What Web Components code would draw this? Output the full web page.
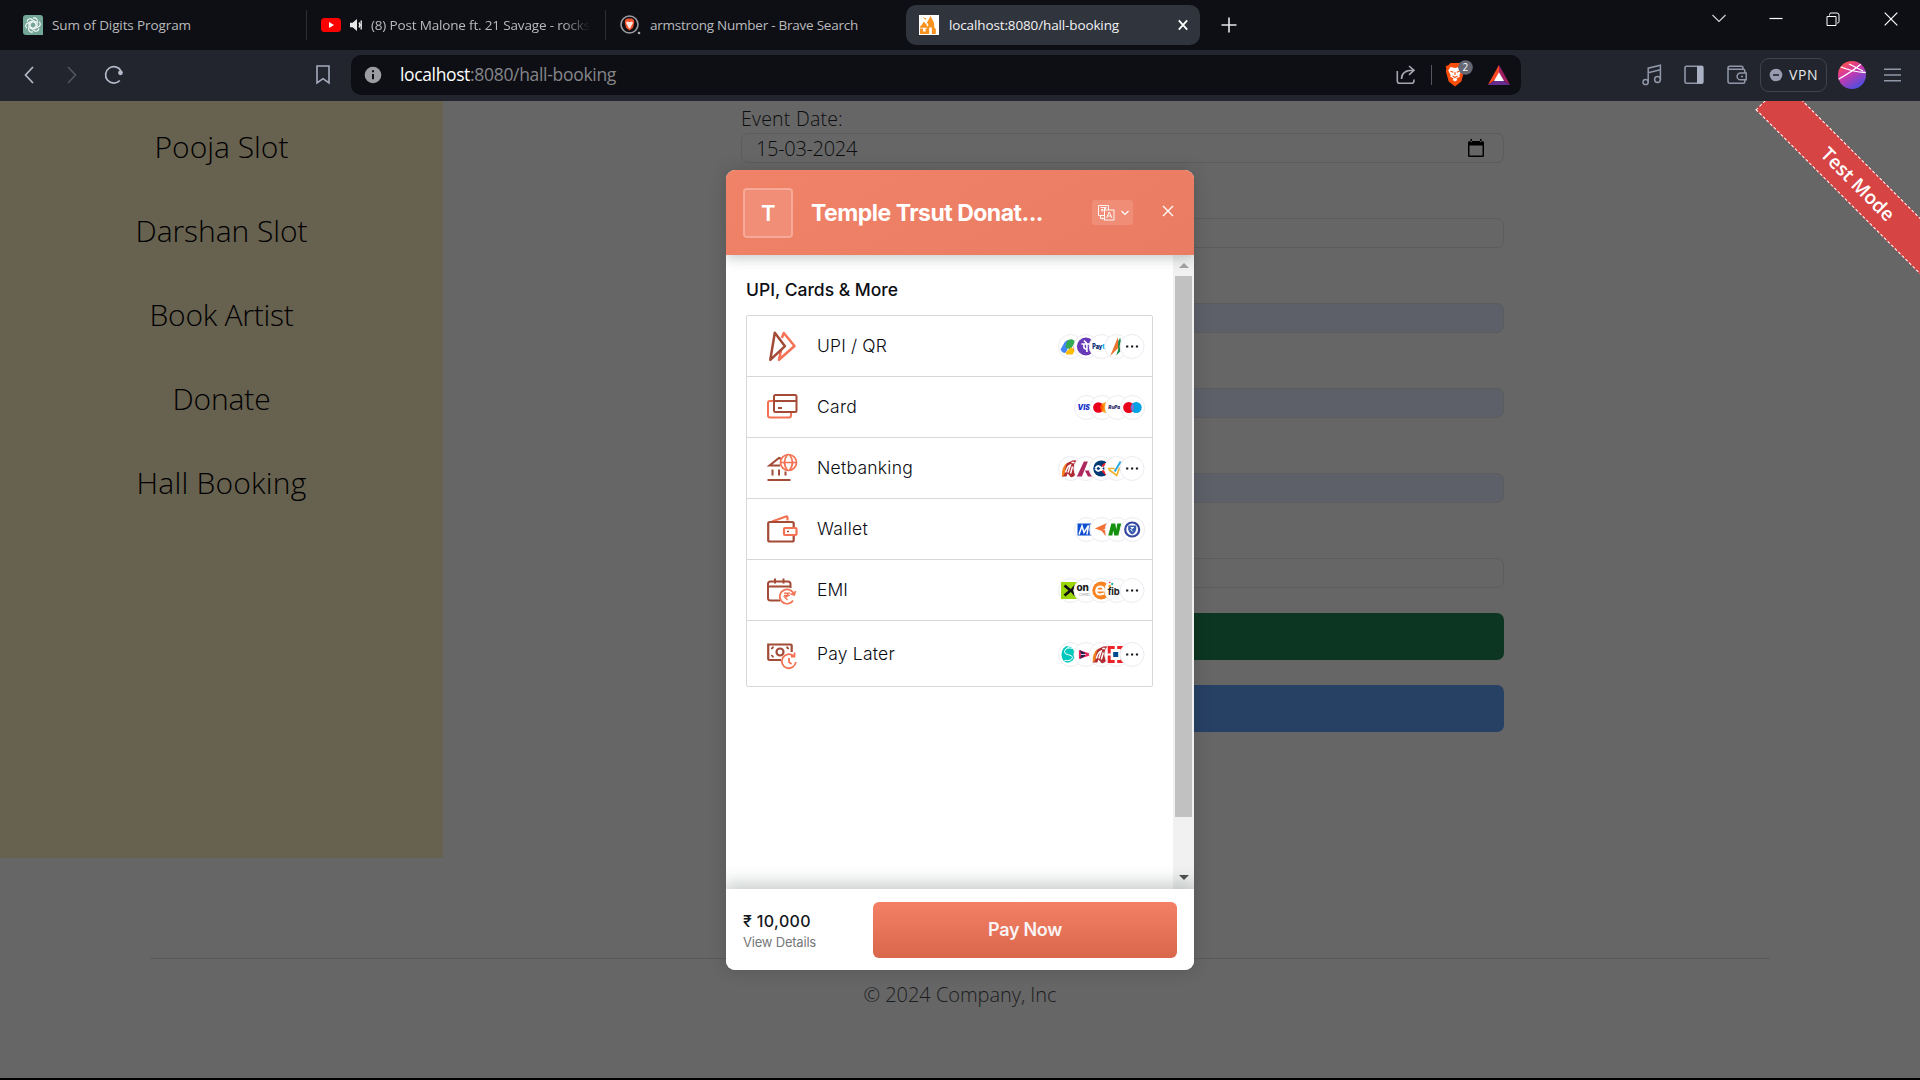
<!DOCTYPE html>
<html lang="en">
<head>
<meta charset="utf-8">
<title>Hall Booking</title>
<style>
html,body{margin:0;padding:0;background:#000;overflow:hidden}
</style>
</head>
<body>
<app-window></app-window>
<script>
const define = (name, html, setup) => {
  const t = document.createElement('template');
  t.innerHTML = html;
  customElements.define(name, class extends HTMLElement {
    constructor() { super(); this.attachShadow({mode: 'open'}).append(t.content.cloneNode(true)); }
    connectedCallback() { if (setup) setup(this, this.shadowRoot); }
  });
};

/* text run whose tracking is adjusted to fill the width given in "w" */
define('fit-text', `<style>:host{display:block;white-space:pre;flex:none}span{display:inline-block}</style><span></span>`, (el, root) => {
  const s = root.querySelector('span');
  s.textContent = el.getAttribute('text');
  const w = +el.getAttribute('w');
  s.style.letterSpacing = '0px';
  const n = parseFloat(getComputedStyle(s).width);
  s.style.letterSpacing = ((w - n) / s.textContent.length) + 'px';
  el.style.width = w + 'px';
});

const PETAL = 'd="M10 3.200c2.400-1.200 5 1 4.200 3.400L14 11l-4 2.400"';
const ICONS = {
  gpt: [20,20,`<path d="M3 0h14q3 0 3 3v17H3q-3 0-3-3V3q0-3 3-3z" fill="#74a698"/><g fill="none" stroke="#fff" stroke-width="1.100">${[0,60,120,180,240,300].map(a => `<path transform="rotate(${a} 10 10)" ${PETAL}/>`).join('')}</g>`],
  yt: [20,20,`<rect y="3" width="20" height="14" rx="3.500" fill="#f00"/><path d="M8 7l5 3-5 3z" fill="#fff"/>`],
  sound: [14,14,`<path d="M1 4.700h2.600L8 1v12L3.600 9.300H1z" fill="#e8e8ea"/><path d="M10 4.500q1.600 2.500 0 5M12.200 2.600v8.800" fill="none" stroke="#e8e8ea" stroke-width="1.400"/>`],
  bsearch: [22,20,`<circle cx="9.500" cy="9.500" r="8.500" fill="#0e0f14" stroke="#9b9da2" stroke-width="1.600"/><path d="M5.500 4.500l1.700-1h4.600l1.700 1 .8 2.500-1.300 5.800-3.500 2.700L6 12.800 4.700 7z" fill="#f4502a"/><path d="M6.500 6.500l3 .6 3-.6.3 2-1.500 2.500-1 2.200h-1.600l-1-2.200-1.500-2.500z" fill="#ffe4de"/><circle cx="19" cy="18" r="1.300" fill="#aaa"/>`],
  temple: [20,20,`<path fill="#fff" d="M0 0h20v20H0z"/><path fill="#f7931e" d="M1 19V11.500l1.200-1L5 6.500l2.300 3.200.7-2.200L11.600 1l3.300 6.500.5 5.300 1.400 1V19z"/><path d="M6 4l-1.500-1.500M6.500 4.500V3" stroke="#f7931e"/><path fill="#fff" d="M4 13h2.600v3.600H4zM10.200 12.500h2.600v6.500h-2.600zM7.500 9.500l1-1.800 1 2.500-1.400 1.500zM1 12.800h7v.7H1z"/>`],
  close: [12,12,`<path d="M1.800 1.300l8.400 9.400M10.200 1.300L1.800 10.700" stroke="#fff" stroke-width="1.800"/>`],
  plus: [16,16,`<path d="M8 .5v15M.5 8h15" stroke="#e6e6e8" stroke-width="1.600"/>`],
  chev: [14,9,`<path d="M.5 1L7 7.500 13.500 1" fill="none" stroke="#d8d8da" stroke-width="1.100"/>`],
  min: [14,14,`<path d="M.5 6.500h13" stroke="#fff" stroke-width="1.200"/>`],
  restore: [14,14,`<path d="M1 4.500h9v9H1zM3.500 3.500v-1q0-1.500 1.500-1.500h6q2 0 2 2v6.500q0 1.500-1.500 1.500H11" fill="none" stroke="#fff" stroke-width="1"/>`],
  wclose: [14,14,`<path d="M.7.700l12.600 12.600M13.300.700L.7 13.300" stroke="#fff" stroke-width="1.200"/>`],
  back: [20,20,`<path d="M13 2L5.500 10l7.500 8" fill="none" stroke="#b4bac9" stroke-width="1.700"/>`],
  fwd: [20,20,`<path d="M7 2l7.500 8L7 18" fill="none" stroke="#50545f" stroke-width="1.700"/>`],
  reload: [20,20,`<path d="M15.800 15.500A8.200 8.200 0 1 1 17 6" fill="none" stroke="#b4bac9" stroke-width="1.700"/><circle cx="16.500" cy="7.800" r="2.400" fill="#b4bac9"/>`],
  bookmark: [14,20,`<path d="M1 1h12v17l-6-4.300L1 18z" fill="none" stroke="#a4abbb" stroke-width="1.600"/>`],
  info: [18,18,`<circle cx="9" cy="9" r="8.300" fill="#9b9da2"/><path d="M9 8v5.200M9 4.300v2" stroke="#0e0f14" stroke-width="2"/>`],
  share: [20,20,`<path d="M1.300 6v10q0 2.300 2.300 2.300h12q2.300 0 2.300-2.300v-1.500" fill="none" stroke="#a4a7ae" stroke-width="1.600"/><path d="M5.500 14q0-8.700 11.500-8.700M13 1l5 4.300-5 4.500" fill="none" stroke="#a4a7ae" stroke-width="1.600"/>`],
  lion: [28,28,`<path d="M2 4.500L4.500 2h9L16 4.500l2.300.5-.7 3 .6 2-2.900 10.500-6.300 5-6.300-5L-.2 10l.6-2-.7-3z" fill="#fb4e0b"/><path d="M4.500 6l3.500.8 1 .2 1-.2 3.500-.8 2.200 3.500-2.400 4.800.5 1.500-3.300 1.500.8 1.700L9 20.500 6.700 19l.8-1.700-3.300-1.500.5-1.500-2.400-4.800z" fill="#fff"/><path d="M4.500 10.300l2.800 1M13.500 10.300l-2.800 1M6.500 15L9 16.500l2.500-1.500M9 11v3" stroke="#fb4e0b" stroke-width="1.100" fill="none"/><circle cx="19.500" cy="6.500" r="7.300" fill="#656874"/>`],
  bat: [24,20,`<path d="M12 0l11.200 20L12 12.500z" fill="#9e1f63"/><path d="M12 0L.8 20 12 12z" fill="#ff4724"/><path d="M.8 20h22.400L12 13z" fill="#662d91"/><path d="M12 7.200l5 8.800H7z" fill="#fff"/>`],
  music: [20,21,`<g fill="none" stroke="#8f97a8" stroke-width="1.500"><circle cx="3.600" cy="18" r="2.600"/><circle cx="15.500" cy="15.500" r="2.900"/><path d="M6.200 18V4.200L18.400 1.200V15.500M6.200 8.800l12.200-3"/></g>`],
  panel: [20,20,`<rect x="1" y="1.200" width="18" height="17" rx="1.500" fill="none" stroke="#8f97a8" stroke-width="1.600"/><path d="M13 1h6v17.500h-6z" fill="#a9b1c2"/>`],
  wallet: [20,20,`<g fill="none" stroke="#8f97a8" stroke-width="1.500"><path d="M17.800 8V5.800q0-1.500-1.500-1.500H3Q1 4.300 1 2.700 1 1.200 3 1.200h11.500q1.500 0 1.500 1.500v1.500M1 2.700v13.500q0 2 2 2h13.300q1.500 0 1.500-1.500V15"/><path d="M19.200 8h-5.700a3.300 3.300 0 0 0 0 6.800h5.700zM14 11.400h2"/></g>`],
  vpn: [14,14,`<circle cx="7" cy="7" r="6.300" fill="#999bb0"/><path d="M4 7h6" stroke="#22252d" stroke-width="1.600"/>`],
  menu: [18,14,`<path d="M0 1.200h17M0 7h17M0 12.800h17" stroke="#8f97a8" stroke-width="1.500"/>`],
  avatar: [28,28,`<defs><linearGradient id="a" x1=".2" y1="0" x2=".8" y2="1"><stop offset="0" stop-color="#ff5544"/><stop offset=".4" stop-color="#d137a8"/><stop offset="1" stop-color="#3b52e8"/></linearGradient><clipPath id="c"><circle cx="14" cy="14" r="14"/></clipPath></defs><g clip-path="url(#c)"><path fill="url(#a)" d="M0 0h28v28H0z"/><path d="M2 5.500Q14 11 28 11.500M0 18.500Q15 10 23 3M11 3l14 7" fill="none" stroke="#fff" stroke-width="1.300"/></g>`],
  cal: [16,18,`<path d="M2 2h12q2 0 2 2v12.500q0 1.500-1.500 1.500h-13Q0 18 0 16.500V4q0-2 2-2zM1.500 6.500V16.500h13V6.500zM2.500 0h1.500v3H2.500zM12 0h1.500v3H12z" fill="#000" fill-rule="evenodd"/>`],
  lang: [17,16,`<g fill="none" stroke="#fff" stroke-width=".9"><path d="M6 10.500H.5V.5h10v4.500"/><rect x="6.500" y="5" width="9.500" height="10"/><path d="M8.500 13l2.700-6 2.700 6M9.500 11h3.500M2.500 2.500h6M3 4.500h2v1.500H3M6.500 2.500v4M8 3l-1.500 2M2.500 10.500v3h3M4.500 12.500l1 1-1 1"/></g>`],
  lchev: [8,6,`<path d="M.5 1L4 4.500 7.500 1" fill="none" stroke="#fff" stroke-width="1.200"/>`],
  mclose: [12,12,`<path d="M1 1l10 10M11 1L1 11" stroke="#fff" stroke-width="1.300"/>`],
  upi: [32,32,`<g fill="none" stroke-width="2.500" stroke-linejoin="round"><path stroke="#f37254" d="M15.800 8l2-5L28.500 16 13 29.800l2.200-10.500"/><path stroke="#a34b37" d="M8.800 2.800l10.200 13.400L4.300 29.800z"/></g>`],
  card: [32,32,`<g fill="none" stroke-width="2"><path stroke="#f37254" d="M7 10H4Q2 10 2 12v12.500q0 2 2 2h19q2 0 2-2V21"/><rect x="8" y="4" width="22.500" height="17" rx="1.500" stroke="#a34b37"/><path stroke="#a34b37" d="M8 10h22M12 17h4"/></g>`],
  bank: [32,32,`<g fill="none" stroke="#a34b37" stroke-width="2"><path d="M14 13.500H3.500L13 6l2 .8M6.500 17.500v6M13 17.500v6M19.500 19.500v4M1.500 28h23"/></g><g fill="none" stroke="#f37254" stroke-width="1.700"><circle cx="22.500" cy="10.500" r="8"/><path d="M14.500 10.500h16M21.500 2.500q-6 8 0 16M23.500 2.500q6 8 0 16"/></g>`],
  wal: [32,32,`<g fill="none" stroke-width="2.200"><path stroke="#f37254" d="M6 8.500L20 3.500q1.500-.5 1.500 1.500v2.500"/><rect x="2.200" y="9" width="25.500" height="19.500" rx="1.500" stroke="#a34b37"/><rect x="18" y="15" width="12.500" height="7" rx="1" stroke="#f37254" fill="#fff"/><path stroke="#a34b37" d="M21 18.500h2" stroke-width="1.600"/></g>`],
  emi: [32,32,`<g fill="none" stroke-width="2"><path stroke="#a34b37" d="M14 26.500H4.500Q2 26.500 2 24V10q0-2.500 2.500-2.500H22q2.500 0 2.500 2.500v4M2 12.500h22.500M9 4.500v5M17.500 4.500v5"/><path stroke="#f37254" stroke-width="1.700" d="M28 21a7.200 7.200 0 1 0-1 5.500M29.500 17l-1.300 4-3.700-1.300"/><path stroke="#f37254" stroke-width="1.300" d="M18 19.200h6M18 21.300h6M18 19.200q4 0 4 2.100-.5 1.700-3.500 1.700l3 3"/></g>`],
  later: [32,32,`<g fill="none" stroke-width="2.200"><path stroke="#a34b37" d="M15 22H3.500Q2.200 22 2.200 20.500V6.500h22.500q1 0 1 1V14"/><circle cx="14" cy="14" r="3.500" stroke="#a34b37"/><path stroke="#a34b37" stroke-width="1.700" d="M5 10.500q2 0 2-2M5 17.500q2 0 2 2M23 10.500q-2 0-2-2"/><path stroke="#f37254" stroke-width="1.800" d="M27.500 18a7 7 0 1 0 2.300 6M28.500 14.500v4H25M23 20v4l2.500 2"/></g>`]
};
define('x-icon', `<style>:host{display:block;flex:none;line-height:0}svg{display:block;overflow:visible}</style><div></div>`, (el, root) => {
  const [w, h, body] = ICONS[el.getAttribute('name')];
  root.querySelector('div').innerHTML = `<svg width="${w}" height="${h}" viewBox="0 0 ${w} ${h}">${body}</svg>`;
});

/* brand marks, each drawn around 0,0 within a 24px badge */
const MARKS = {
  gpay: `<path d="M-10 3l4-7q3-4 6-1L-4 5q-3 4-6-2z" fill="#4285f4"/><path d="M-4-4q2-4 6-3l3 2-5 8-5-2z" fill="#34a853"/><path d="M-5 6l5-5 5 2-3 5h-6z" fill="#fbbc04"/><path d="M3 0l1.500-4 2.500 3-2 6-2-2z" fill="#ea4335"/>`,
  phonepe: `<circle r="9" fill="#673ab7"/><path d="M-4.500-2.500H4M1-2.500v8M-2-2.500v3q0 2 3 2M-2-6l3 3" stroke="#fff" stroke-width="1.600" fill="none"/>`,
  paytm: `<text x="-9" y="3" font-size="7" font-weight="900" fill="#0a2e73" textLength="10" lengthAdjust="spacingAndGlyphs">Pay</text><text x="1" y="3" font-size="7" font-weight="900" fill="#00b9f1">t</text>`,
  bhim: `<path d="M-6.500 9.500L1-9l2 9z" fill="#ed752e"/><path d="M1.500 3l0-8 2-4 1 6-1 8-4 4z" fill="#168849"/>`,
  dots: `<path d="M-6 0h2.200M-1.100 0h2.200M3.800 0h2.200" stroke="#16191f" stroke-width="2"/>`,
  visa: `<text x="-9" y="3" font-size="7.500" font-style="italic" font-weight="900" fill="#1434cb" textLength="12.500" lengthAdjust="spacingAndGlyphs">VIS</text>`,
  mc: `<circle cx="-3.500" r="5.300" fill="#eb001b"/><circle cx="4" r="5.300" fill="#f79e1b"/><path d="M.2-3.700a5.300 5.300 0 0 1 0 7.400 5.300 5.300 0 0 1 0-7.400" fill="#ff5f00"/>`,
  rupay: `<text x="-9" y="2" font-size="4.500" font-style="italic" font-weight="900" fill="#2b2a6b" textLength="12" lengthAdjust="spacingAndGlyphs">RuPa</text>`,
  maestro: `<circle cx="-4" r="5.500" fill="#eb001b"/><circle cx="3.500" r="5.500" fill="#00a2e5"/><path d="M-.2-4a5.500 5.500 0 0 1 0 8 5.500 5.500 0 0 1 0-8" fill="#7375cf"/>`,
  icici: `<path d="M-8.500 8Q-8-5 2-8q5-1 5 2L4 7.500Q0 10-1 7L-3 5l-1 3z" fill="#b02a30"/><path d="M-8.500 8q-1-9 5-14-2 5-2.500 12z" fill="#f58220"/><path d="M-5 4q2-7 5-7.500L-2.500 4M1-6h3M2-2L0 5" stroke="#fff" stroke-width="1.500" fill="none"/>`,
  axis: `<path d="M-9 8L-2-7h4L-4 8zM-1 2h4l4 6H2z" fill="#ae285d"/>`,
  kotak: `<circle r="8" cx="0" fill="#003974"/><path d="M-6 0q3-5 6 0 3 5 6 0M-6 0q3 5 6 0 3-5 6 0" stroke="#fff" stroke-width="2" fill="none"/><path d="M1-2l3-3M1 2l4 4" stroke="#ed1c24" stroke-width="2"/>`,
  hdfcn: `<path d="M-9 0h7M-8 1l8 6 3-8" stroke="#f3b229" stroke-width="1.700" fill="none"/><path d="M4-7L-2 3" stroke="#28a8e0" stroke-width="2"/>`,
  mobi: `<path d="M-9-6H7V6H-9z" fill="#0d4fd0"/><path d="M-7.500 5l3-8.500L-2.500 3 2-4 .5 5M4 5V-5" stroke="#fff" stroke-width="1.500" fill="none"/>`,
  fchg: `<path d="M-7-1L5-6.500 3.500 6.500 0 1.500z" fill="#f37037"/><path d="M1 0l4-1v2z" fill="#fff"/>`,
  nn: `<path d="M-9 6l3-12h4L-1 0l1-6h4L1 6h-4l-1-5-1 5z" fill="#15910f"/>`,
  rzp: `<circle r="7" cx="-.5" fill="#fff" stroke="#37479f" stroke-width="2.200"/><path d="M-4.500-4h8v4q-1 4-4 5-3-1-4-5z" fill="#3a5cac"/><path d="M-2-2h3l-3 2 2 2" stroke="#fff" fill="none"/>`,
  xest: `<path d="M-9.500-8.500H8v17H-9.500z" fill="#9bd60b"/><path d="M-6-5l6 5-6 5M5-5L1 0l4 5" stroke="#111" stroke-width="2.800" fill="none"/>`,
  one: `<text x="-9.500" y="1" font-size="10" font-weight="800" fill="#222" textLength="12.500">on</text><text x="-7" y="5.500" font-size="4" fill="#777">CARD</text>`,
  epay: `<circle r="9" fill="#f8821f"/><path d="M-4.500 0h7q0-4-3.500-4t-4 4 4 4l4-1" stroke="#fff" stroke-width="2.200" fill="none"/>`,
  fibe: `<text x="-9" y="5" font-size="9.500" font-weight="700" fill="#222" textLength="12">fib</text><circle cx="-7" cy="-4.500" r="1.300" fill="#f9a11b"/><circle cx="-4.500" cy="-6.500" r="1.200" fill="#21b5a8"/><circle cx="-7" cy="-8" r=".8" fill="#e33"/>`,
  simpl: `<ellipse cx="-2.500" rx="6.500" ry="8.500" fill="#00c8bc"/><path d="M3-6Q-5-8-6-3q0 3 4 3.200Q2 1 2 3 1 7-6 6M5-8Q-2-9-4-6M-8 8q6 2 9-1" stroke="#fff" stroke-width="1" fill="none"/>`,
  lazy: `<path d="M-7-4.500L4-1v2l-11 3.500z" fill="#e6235a"/><path d="M-6-4.500l5 3v3l-5 3 1.500-4.500z" fill="#1f2350"/><path d="M-5 0h5" stroke="#fff" stroke-width=".8"/>`,
  hdfc: `<path d="M-9-8.500H7v17H-9z" fill="#ed232a"/><path d="M-6-5.500H4v11H-6zM-2-9H.500v18H-2zM-10-1H9v2h-19z" fill="#fff"/><path d="M-3.500-2.500h5v5h-5z" fill="#004c8f"/>`
};
define('brand-stack', `<style>:host{display:block;flex:none;font-family:Inter,sans-serif}svg{display:block}</style><div></div>`, (el, root) => {
  const m = el.getAttribute('marks').split(' '), p = 15.400, w = 25 + p * (m.length - 1);
  root.querySelector('div').innerHTML = `<svg width="${w}" height="26" viewBox="0 0 ${w} 26">` + m.map((k, i) =>
    `<g transform="translate(${12.500 + p * i} 13.500)"><circle r="12" fill="#fff" stroke="#ebebf1"/>${MARKS[k]}</g>`).join('') + '</svg>';
});

define('tab-strip', `<style>
:host{display:flex;height:50px;background:#0e0f14;font:13.500px "Open Sans",sans-serif;color:#b9babd;box-sizing:border-box}
.t{display:flex;align-items:center;box-sizing:border-box;height:50px;flex:none}
.sep{width:1px;height:30px;background:#2c2e34;margin-top:10px;flex:none}
.fade{-webkit-mask:linear-gradient(90deg,#000 88%,transparent)}
.on{height:40px;margin-top:5px;border-radius:10px;background:#30343d;color:#f2f2f3}
.wc{display:flex;gap:43px;margin-left:auto;padding:12px 22px 0 0}
.wc x-icon:first-child{padding-top:2px}
</style>
<div class="t" style="width:306px;padding-left:23px;gap:9px"><x-icon name="gpt"></x-icon><fit-text text="Sum of Digits Program" w="139"></fit-text></div><div class="sep"></div>
<div class="t" style="width:298px;padding-left:14px;gap:8px"><x-icon name="yt"></x-icon><x-icon name="sound"></x-icon><div class="fade"><fit-text text="(8) Post Malone ft. 21 Savage - rocks" w="219"></fit-text></div></div><div class="sep"></div>
<div class="t" style="width:300px;padding-left:14px;gap:8px"><x-icon name="bsearch"></x-icon><fit-text text="armstrong Number - Brave Search" w="208"></fit-text></div>
<div class="t on" style="width:294px;padding:0 11px 0 13px;gap:10px"><x-icon name="temple"></x-icon><fit-text text="localhost:8080/hall-booking" w="170"></fit-text><x-icon name="close" style="margin-left:auto"></x-icon></div>
<div class="t" style="padding-left:21px"><x-icon name="plus"></x-icon></div>
<div class="wc"><x-icon name="chev"></x-icon><x-icon name="min"></x-icon><x-icon name="restore"></x-icon><x-icon name="wclose" style="margin-left:1px"></x-icon></div>`);

define('nav-bar', `<style>
:host{display:flex;align-items:center;height:51px;background:#22252d;box-sizing:border-box;padding:0 18px 2px 20px;font-family:"Open Sans",sans-serif}
.pill{display:flex;align-items:center;box-sizing:border-box;margin-left:21px;width:1170px;height:40px;border-radius:10px;background:#0e0f14;padding:0 10px 0 13px;font-size:17.500px;color:#85868a;flex:none}
.u{display:flex;margin-left:18px;position:relative;top:-.5px}
.bar{width:1.500px;height:20px;background:#55575e;margin:0 14px 0 15px}
.shield{position:relative;color:#fff;font-size:10px}.shield fit-text{position:absolute;left:16.500px;top:-1px;line-height:14px}
.r{display:flex;align-items:center;margin-left:auto}
.vpn{display:flex;align-items:center;gap:6px;box-sizing:border-box;width:67px;height:34px;border:1px solid #41444f;border-radius:9px;padding:0 8px;color:#e8e8ec;font-size:14px;margin:0 11px 0 13px}
</style>
<x-icon name="back"></x-icon><x-icon name="fwd" style="margin-left:21px"></x-icon><x-icon name="reload" style="margin-left:23px"></x-icon>
<x-icon name="bookmark" style="margin-left:192px"></x-icon>
<div class="pill"><x-icon name="info"></x-icon><div class="u"><fit-text text="localhost" w="70" style="color:#fff"></fit-text><fit-text text=":8080/hall-booking" w="146"></fit-text></div>
<x-icon name="share" style="margin-left:auto"></x-icon><div class="bar"></div><div class="shield"><x-icon name="lion"></x-icon><fit-text text="2" w="6"></fit-text></div><x-icon name="bat" style="margin-left:13px"></x-icon></div>
<div class="r"><x-icon name="music"></x-icon><x-icon name="panel" style="margin-left:22px"></x-icon><x-icon name="wallet" style="margin-left:23px"></x-icon>
<div class="vpn"><x-icon name="vpn"></x-icon><fit-text text="VPN" w="29"></fit-text></div><x-icon name="avatar"></x-icon><x-icon name="menu" style="margin-left:18px"></x-icon></div>`);

define('side-menu', `<style>
:host{display:flex;flex-direction:column;align-items:center;width:443px;height:757px;background:#676150;box-sizing:border-box;padding-top:4px;font:300 30px/84px "Open Sans","Noto Sans",sans-serif;color:#000;flex:none}
</style>
<fit-text text="Pooja Slot" w="134"></fit-text><fit-text text="Darshan Slot" w="172"></fit-text><fit-text text="Book Artist" w="144"></fit-text><fit-text text="Donate" w="98"></fit-text><fit-text text="Hall Booking" w="170"></fit-text>`);

define('form-field', `<style>
:host{display:flex;flex-direction:column;height:85px}
.l{height:32px;font-size:19.500px;line-height:36px}
.i{display:flex;align-items:center;justify-content:space-between;box-sizing:border-box;height:30px;border:1px solid #5b5c5e;border-radius:7px;padding:0 19px 0 14px;font-size:20px}
:host([filled]) .i{background:#5d6069}
</style><div class="l"><slot name="label"></slot></div><div class="i"><slot></slot></div>`);

define('booking-form', `<style>
:host{display:flex;flex-direction:column;width:763px;font-family:"Open Sans","Noto Sans",sans-serif;font-weight:300;color:#0c0d0f}
.b{height:47px;border-radius:7px;background:#0c3622;flex:none}
.b+.b{background:#274165;margin-top:25px}
form-field:last-of-type{height:87px}
</style>
<form-field><fit-text slot="label" text="Event Date:" w="102"></fit-text><fit-text text="15-03-2024" w="101"></fit-text><x-icon name="cal"></x-icon></form-field>
<form-field></form-field><form-field filled></form-field><form-field filled></form-field><form-field filled></form-field><form-field></form-field>
<div class="b"></div><div class="b"></div>`);

define('site-footer', `<style>
:host{display:flex;flex-direction:column;align-items:center;box-sizing:border-box;width:1620px;margin:0 auto;border-top:1px solid #58595a;font:300 20px/30px "Open Sans","Noto Sans",sans-serif;color:#1b1c1e;padding-top:21px}
</style><fit-text text="© 2024 Company, Inc" w="193"></fit-text>`);

customElements.define('pay-method', class extends HTMLElement {
  constructor() {
    super();
    const g = k => this.getAttribute(k);
    this.attachShadow({mode: 'open'}).innerHTML = `<style>
:host{display:flex;align-items:center;box-sizing:border-box;height:61px;border-bottom:1px solid #d6d8d9;padding:0 7px 0 19px;font-size:17.500px;font-weight:300;color:#0a0c12}
:host(:last-child){height:66px;border-bottom:0}
fit-text{margin:0 auto 2px 19px}</style>
<x-icon name="${g('icon')}"></x-icon><fit-text text="${g('label')}" w="${g('w')}"></fit-text><brand-stack marks="${g('marks')}"></brand-stack>`;
  }
});

define('checkout-modal', `<style>
:host{display:flex;flex-direction:column;position:absolute;left:726px;top:69px;width:468px;height:800px;border-radius:9px;overflow:hidden;background:#fff;font-family:Inter,sans-serif;box-shadow:0 0 18px rgba(0,0,0,.16)}
header{display:flex;align-items:center;height:85px;background:linear-gradient(150deg,#f08268,#ea7c63);color:#fff;padding:0 20px 0 17px;box-shadow:0 3px 12px rgba(30,50,45,.26);z-index:1;flex:none}
.logo{display:flex;align-items:center;justify-content:center;box-sizing:border-box;width:50px;height:50px;border:2px solid #f7a997;border-radius:4px;background:#f08e78;font-size:22px;font-weight:600}
.lang{display:flex;align-items:center;gap:6px;box-sizing:border-box;width:41px;height:25px;border-radius:3px;background:#ef8d77;padding:0 6px;margin-left:49px}
.mid{display:flex;height:634px}
.body{flex:1;padding:26px 20px 0}
.list{box-sizing:border-box;width:407px;height:372px;border:1px solid #d6d8d9;border-radius:2px}
.bar{display:flex;flex-direction:column;width:21px;background:#f1f1f1}
.th{height:541px;margin:0 2px;background:#c1c1c1}
.a{display:flex;justify-content:center;align-items:center;height:21px}
footer{display:flex;align-items:center;height:81px;background:#fff;box-sizing:border-box;padding:0 17px;justify-content:space-between;box-shadow:0 -3px 16px 3px rgba(30,50,45,.24);z-index:1;flex:none}
.btn{display:flex;align-items:center;justify-content:center;width:304px;height:56px;border-radius:6px;background:linear-gradient(#f47f65,#d9674b);color:#f8f3f5;font-size:18px;font-weight:600}
</style>
<header><div class="logo"><fit-text text="T" w="14"></fit-text></div><fit-text text="Temple Trsut Donat..." w="232" style="margin-left:18px;font-size:23px;font-weight:700"></fit-text>
<div class="lang"><x-icon name="lang"></x-icon><x-icon name="lchev"></x-icon></div><x-icon name="mclose" style="margin:-3px 0 0 auto"></x-icon></header>
<div class="mid"><div class="body"><fit-text text="UPI, Cards &amp; More" w="152" style="font-size:17.500px;font-weight:500;line-height:18px;color:#0d0f14;margin-bottom:16px"></fit-text>
<div class="list">
<pay-method icon="upi" label="UPI / QR" w="70" marks="gpay phonepe paytm bhim dots"></pay-method>
<pay-method icon="card" label="Card" w="40" marks="visa mc rupay maestro"></pay-method>
<pay-method icon="bank" label="Netbanking" w="96" marks="icici axis kotak hdfcn dots"></pay-method>
<pay-method icon="wal" label="Wallet" w="51" marks="mobi fchg nn rzp"></pay-method>
<pay-method icon="emi" label="EMI" w="31" marks="xest one epay fibe dots"></pay-method>
<pay-method icon="later" label="Pay Later" w="78" marks="simpl lazy icici hdfc dots"></pay-method>
</div></div>
<div class="bar"><div class="a"><svg width="10" height="5"><path d="M5 0l5 5H0z" fill="#a3a3a3"/></svg></div><div class="th"></div><div class="a" style="margin-top:auto;height:24px"><svg width="10" height="5"><path d="M0 0h10L5 5z" fill="#505050"/></svg></div></div></div>
<footer><div style="padding-top:2px"><fit-text text="₹ 10,000" w="68" style="font-size:16px;font-weight:500;line-height:22px;color:#14171c"></fit-text><fit-text text="View Details" w="73" style="font-size:13px;line-height:20px;color:#757779"></fit-text></div>
<div class="btn"><fit-text text="Pay Now" w="74"></fit-text></div></footer>`);

define('test-ribbon', `<style>
:host{display:flex;align-items:center;justify-content:center;position:absolute;left:1732.500px;top:63px;width:250px;height:40px;box-sizing:border-box;border:1px dashed #fff;background:#d64444;color:#fff;font:600 19px "Open Sans",sans-serif;transform:rotate(45deg)}
</style><fit-text text="Test Mode" w="95"></fit-text>`);

define('page-view', `<style>
:host{display:flex;flex-direction:column;position:relative;height:977px;background:#666;overflow:hidden}
.row{display:flex;height:857px;flex:none}
booking-form{margin-left:298px}
</style><div class="row"><side-menu></side-menu><booking-form></booking-form></div><site-footer></site-footer><checkout-modal></checkout-modal><test-ribbon></test-ribbon>`);

define('app-window', `<style>:host{display:flex;flex-direction:column;width:1920px;height:1080px;background:#000;overflow:hidden}</style>
<tab-strip></tab-strip><nav-bar></nav-bar><page-view></page-view>`);
</script>
</body>
</html>
